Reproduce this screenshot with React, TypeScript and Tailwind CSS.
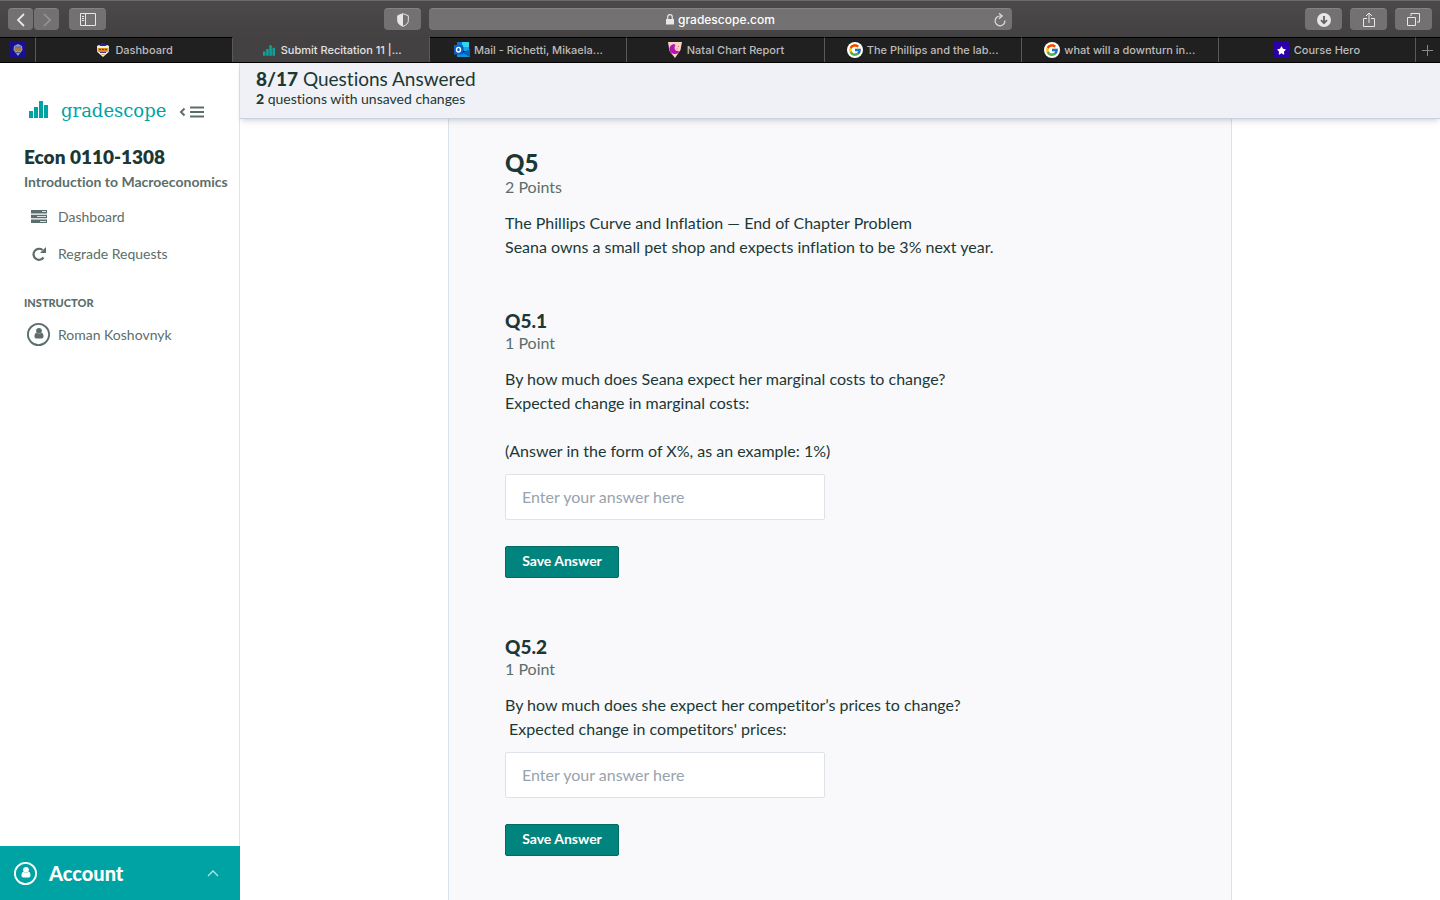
import type { ReactNode } from 'react'
import { FcGoogle } from 'react-icons/fc'
import { FaLock, FaStar } from 'react-icons/fa'

function GradescopeBars({ className }: { className: string }) {
  return (
    <svg viewBox="0 0 19 17" className={className} fill="currentColor" aria-hidden="true">
      <path d="M0 10h4v7H0zM5 6h4v11H5zM10 0h4v17h-4zM15 4h4v13h-4z" />
    </svg>
  )
}

function ShieldCrest() {
  return (
    <svg viewBox="0 0 12 14" className="h-3.5 w-3" aria-hidden="true">
      <path d="M3 1.500L6 0l3 1.500V3H3z" fill="#26209a" />
      <path d="M0 3l2-1 1.500 1h5L10 2l2 1-.3 6L6 14 .3 9z" fill="#f3efe4" />
      <path d="M1 5h10l-.4 4H1.400z" fill="#d98a16" />
      <path d="M2 6.500h2M5 6.500h2M8 6.500h2M3 9.500h6" stroke="#4a3590" fill="none" />
      <path d="M4.500 11.500h3" stroke="#d9a846" />
    </svg>
  )
}

function PinnedIcon() {
  return (
    <svg viewBox="0 0 16 16" className="size-4" aria-hidden="true">
      <path d="M0 0h16v16H0z" fill="#1c0d96" />
      <path d="M4 4l4-2 4 2 .5 4L8 14 3.500 8z" fill="#8ba0b5" />
      <path d="M4.500 6h7l-.5 3H5z" fill="#a17a42" />
      <path d="M5 5h6M6 10.500h4" stroke="#39539c" />
    </svg>
  )
}

function OutlookIcon() {
  return (
    <svg viewBox="0 0 16 16" className="size-4" aria-hidden="true">
      <path d="M3 0h12v9H3z" fill="#0a74d8" />
      <path d="M8 0h7v5H8z" fill="#35d2f8" />
      <path d="M10 5h5v4h-5z" fill="#14a4ee" />
      <path d="M3 15V9l6 2 7-4v8z" fill="#1490df" />
      <path d="M9 11l7-4v8z" fill="#0a5fb8" />
      <path d="M0 3h9v9.500H0z" fill="#0a5fc4" />
      <ellipse cx="4.500" cy="7.700" rx="2" ry="2.300" fill="none" stroke="#fff" strokeWidth="1.400" />
    </svg>
  )
}

function NatalIcon() {
  return (
    <svg viewBox="0 0 16 16" className="size-4" aria-hidden="true">
      <path d="M1 0h14l-1.500 8L8 16 2.500 9z" fill="#f6d3c4" />
      <path d="M7 2C1 3 1 11 7 12c3 .4 5-1 5.500-3C9 10 6 7 8.500 3z" fill="#b511b5" />
      <path d="M11 4h1v1h-1zM9.500 6.500h1v1h-1z" fill="#c76a50" />
    </svg>
  )
}

function GoogleIcon() {
  return (
    <span className="flex size-4 items-center justify-center rounded-full bg-white">
      <FcGoogle size={14} />
    </span>
  )
}

function CourseHeroIcon() {
  return (
    <span className="flex size-4 items-center justify-center bg-[#2b00a8] text-white">
      <FaStar size={9} />
    </span>
  )
}

type TabItem = { title: string; icon: ReactNode; active?: boolean }

const tabs: TabItem[] = [
  { title: 'Dashboard', icon: <ShieldCrest /> },
  { title: 'Submit Recitation 11 |...', icon: <GradescopeBars className="h-[11px] w-3 text-[#12a19a]" />, active: true },
  { title: 'Mail - Richetti, Mikaela...', icon: <OutlookIcon /> },
  { title: 'Natal Chart Report', icon: <NatalIcon /> },
  { title: 'The Phillips and the lab...', icon: <GoogleIcon /> },
  { title: 'what will a downturn in...', icon: <GoogleIcon /> },
  { title: 'Course Hero', icon: <CourseHeroIcon /> },
]

function ToolButton({ label, className, children }: { label: string; className: string; children: ReactNode }) {
  return (
    <button
      type="button"
      aria-label={label}
      className={`flex h-[22px] shrink-0 items-center justify-center rounded border-t border-[#848282] bg-[#737171] text-[#e8e6e6] ${className}`}
    >
      {children}
    </button>
  )
}

function Toolbar() {
  return (
    <div className="grid h-[37px] grid-cols-[376fr_628px_420fr] items-center border-t border-[#6d6c6c] bg-linear-to-b from-[#4b4949] to-[#434141] px-2">
      <div className="flex">
        <ToolButton label="Back" className="w-[25px]">
          <svg viewBox="0 0 8 14" className="h-3.5 w-2" fill="none" stroke="currentColor" strokeWidth="1.800">
            <path d="M7 1L1 7l6 6" />
          </svg>
        </ToolButton>
        <ToolButton label="Forward" className="ml-px w-[25px]">
          <svg viewBox="0 0 8 14" className="h-3.5 w-2 text-[#969494]" fill="none" stroke="currentColor" strokeWidth="1.600">
            <path d="M1 1l6 6-6 6" />
          </svg>
        </ToolButton>
        <ToolButton label="Show sidebar" className="ml-2.5 w-[37px]">
          <svg viewBox="0 0 16 13" className="h-[13px] w-4" fill="none" stroke="currentColor">
            <path d="M.5.5h15v12H.5zM5.500.5v12M2 3.500h2M2 5.500h2M2 7.500h2" />
          </svg>
        </ToolButton>
      </div>
      <div className="flex gap-2">
        <ToolButton label="Privacy report" className="w-[37px]">
          <svg viewBox="0 0 12 14" className="h-3.5 w-3">
            <path d="M6 .7l5.300 2v5c0 2.500-2 4.500-5.300 5.600C2.700 12.200.7 10.200.7 7.700v-5z" fill="none" stroke="currentColor" />
            <path d="M6 .7v12.600C2.700 12.200.7 10.200.7 7.700v-5z" fill="currentColor" />
          </svg>
        </ToolButton>
        <div className="relative flex h-[22px] flex-1 items-center justify-center gap-1 rounded border-t border-[#848282] bg-[#737171] text-white">
          <svg viewBox="0 0 8 11" className="h-[11px] w-2 text-[#e8e6e6]" aria-hidden="true">
            <path d="M0 5h8v5.500H0z" fill="currentColor" />
            <path d="M1.700 5V3a2.300 2.300 0 0 1 4.600 0v2" fill="none" stroke="currentColor" strokeWidth="1.200" />
          </svg>
          <span className="text-xs font-medium">gradescope.com</span>
          <button type="button" aria-label="Reload" className="absolute right-1.5">
            <svg viewBox="0 0 12 14" className="h-3.5 w-3 text-[#e0dede]" fill="none" stroke="currentColor" strokeWidth="1.200">
              <path d="M10.900 7.500A4.900 4.900 0 1 1 6 3h1.500" />
              <path d="M5 .3L8.200 3 5 5.700" />
            </svg>
          </button>
        </div>
      </div>
      <div className="flex justify-end gap-2">
        <ToolButton label="Downloads" className="w-[37px]">
          <svg viewBox="0 0 14 14" className="size-3.5">
            <circle cx="7" cy="7" r="7" fill="currentColor" />
            <path d="M7 3v7M4 7.200l3 3 3-3" fill="none" stroke="#646262" strokeWidth="1.800" />
          </svg>
        </ToolButton>
        <ToolButton label="Share" className="w-[37px]">
          <svg viewBox="0 0 12 16" className="h-4 w-3" fill="none" stroke="currentColor">
            <path d="M4 6.500H.5v8h11v-8H8M6 11V1M3 4l3-3 3 3" />
          </svg>
        </ToolButton>
        <ToolButton label="Show tabs" className="w-[37px]">
          <svg viewBox="0 0 13 13" className="size-[13px]" fill="none" stroke="currentColor">
            <path d="M.5 4.500h8v8h-8zM4 3V.5h8.500V9H10" />
          </svg>
        </ToolButton>
      </div>
    </div>
  )
}

function TabBar() {
  return (
    <nav aria-label="Tabs" className="flex h-[26px] border-b border-black bg-[#212020] text-[11px] text-[#bdbbbb]">
      <button type="button" aria-label="Pinned tab" className="flex w-9 shrink-0 items-center justify-center border-t border-r border-t-black border-r-[#5a5959]">
        <PinnedIcon />
      </button>
      {tabs.map((tab) => (
        <button
          key={tab.title}
          type="button"
          className={`flex min-w-0 flex-1 items-center justify-center gap-1 whitespace-nowrap border-t border-r border-r-[#5a5959] ${
            tab.active ? 'border-t-[#434141] bg-[#434141] text-[#e4e2e2]' : 'border-t-black'
          }`}
        >
          <span className="flex size-4 items-center justify-center">{tab.icon}</span>
          <span className="font-medium">{tab.title}</span>
        </button>
      ))}
      <button type="button" aria-label="New tab" className="flex w-6 shrink-0 items-center justify-center border-t border-black text-[#8a8888]">
        <svg viewBox="0 0 11 11" className="size-[11px]" stroke="currentColor">
          <path d="M5.500 0v11M0 5.500h11" />
        </svg>
      </button>
    </nav>
  )
}

function Avatar() {
  return (
    <svg viewBox="0 0 23 23" className="size-[23px] shrink-0" aria-hidden="true">
      <circle cx="11.500" cy="11.500" r="10.600" fill="none" stroke="currentColor" strokeWidth="1.800" />
      <circle cx="12" cy="7.800" r="2.900" fill="currentColor" />
      <path d="M9.300 9.800c1.600 1.500 3.800 1.500 5.400 0 1.400.5 1.800 2 1.800 3.700 0 1.300-.7 2-1.800 2H9.300c-1.100 0-1.800-.7-1.800-2 0-1.700.4-3.200 1.800-3.700z" fill="currentColor" />
    </svg>
  )
}

function Sidebar() {
  return (
    <aside className="flex w-60 shrink-0 flex-col border-r border-[#e1e4e6] text-[#5b6e6b]">
      <div className="flex-1 px-6 pt-8">
        <div className="flex h-8 items-center">
          <a href="#" className="flex items-center text-[#00a3a3]">
            <GradescopeBars className="mr-1 mb-1 ml-[5px] h-[17px] w-[19px]" />
            <span className="ml-[9px] font-['DejaVu_Serif',serif] text-[18px] leading-8">gradescope</span>
          </a>
          <button type="button" aria-label="Collapse sidebar" className="mt-0.5 ml-[13px]">
            <svg viewBox="0 0 25 12" className="h-3 w-[25px]" fill="none" stroke="currentColor" strokeWidth="2">
              <path d="M5.500 2.500L2 6l3.500 3.500M11 1.500h14M11 6h14M11 10.500h14" />
            </svg>
          </button>
        </div>
        <h1 className="mt-4 text-[19px] leading-7 font-extrabold text-[#1b3835]">Econ 0110-1308</h1>
        <p className="text-sm leading-[22px] font-bold whitespace-nowrap">Introduction to Macroeconomics</p>
        <nav className="mt-[5px] text-sm">
          <a href="#" className="flex h-[37px] items-center gap-[11px]">
            <svg viewBox="0 0 16 13" className="ml-[7px] h-[13px] w-4">
              <path d="M0 0h16v3.500H0zM0 4.800h16v3.400H0zM0 9.500h16V13H0z" fill="currentColor" />
              <path d="M11 1.500h4M6 6.500h9M9 11.500h6" stroke="#fff" strokeWidth=".8" />
            </svg>
            Dashboard
          </a>
          <a href="#" className="flex h-[37px] items-center gap-3">
            <svg viewBox="0 0 14 14" className="ml-2 size-3.5">
              <path d="M11.500 10.500A5.500 5.500 0 1 1 10.500 3" fill="none" stroke="currentColor" strokeWidth="2.200" />
              <path d="M14 0v6H8z" fill="currentColor" />
            </svg>
            Regrade Requests
          </a>
        </nav>
        <h2 className="mt-[23px] text-[11px] leading-4 font-black">INSTRUCTOR</h2>
        <div className="mt-[5px] flex h-[37px] items-center gap-2 pl-[3px] text-sm">
          <Avatar />
          Roman Koshovnyk
        </div>
      </div>
      <button type="button" className="-mr-px flex h-[54px] items-center gap-3 bg-[#00a3a3] px-3.5 text-white">
        <Avatar />
        <span className="text-[20px] font-black">Account</span>
        <svg viewBox="0 0 12 8" className="mr-[7px] ml-auto h-2 w-3 opacity-70" fill="none" stroke="currentColor" strokeWidth="1.300">
          <path d="M1 7l5-5 5 5" />
        </svg>
      </button>
    </aside>
  )
}

type QuestionProps = { id: string; lines: string[] }

function Question({ id, lines }: QuestionProps) {
  return (
    <section>
      <h3 className="text-[19px] leading-5 font-black">{id}</h3>
      <p className="text-[#5b6e6b]">1 Point</p>
      <label htmlFor={id} className="mt-3 block">
        {lines.map((line, i) => (
          <span key={i} className="block min-h-6 whitespace-pre">{line}</span>
        ))}
      </label>
      <input
        id={id}
        type="text"
        placeholder="Enter your answer here"
        className="mt-[11px] block h-[46px] w-80 rounded-xs border border-[#dde3e8] bg-white px-4 pb-0.5 placeholder:text-[#98a3ad]"
      />
      <button type="button" className="mt-[26px] block h-8 w-[114px] rounded-xs border border-[#026b64] bg-[#01847d] pb-0.5 text-sm font-bold text-white">
        Save Answer
      </button>
    </section>
  )
}

export default function App() {
  return (
    <div className="flex h-screen flex-col overflow-hidden bg-white font-['Lato',sans-serif] text-[#1b3835] [font-variant-ligatures:none]">
      <header className="shrink-0 font-['Inter',sans-serif]">
        <Toolbar />
        <TabBar />
      </header>
      <div className="flex min-h-0 flex-1">
        <Sidebar />
        <div className="flex min-w-0 flex-1 flex-col">
          <div className="z-10 h-14 shrink-0 border-b border-[#c8d2e0] bg-[#f0f1f6] px-4 pt-[5px] shadow-md">
            <p className="text-[19px] leading-[22px]"><b className="font-black">8/17</b> Questions Answered</p>
            <p className="text-sm leading-[18px]"><b className="font-black">2</b> questions with unsaved changes</p>
          </div>
          <main className="min-h-0 flex-1 overflow-hidden">
            <div className="mx-auto min-h-full max-w-[784px] border-x border-[#dbe1ea] bg-[#f9f9fc] px-14 pt-8 pb-11 text-base leading-6">
              <h2 className="text-[24px] leading-6 font-black">Q5</h2>
              <p className="text-[#5b6e6b]">2 Points</p>
              <p className="mt-3">The Phillips Curve and Inflation — End of Chapter Problem</p>
              <p>Seana owns a small pet shop and expects inflation to be 3% next year.</p>
              <div className="mt-[52px] flex flex-col gap-[59px]">
                <Question
                  id="Q5.1"
                  lines={[
                    'By how much does Seana expect her marginal costs to change?',
                    'Expected change in marginal costs:',
                    '',
                    '(Answer in the form of X%, as an example: 1%)',
                  ]}
                />
                <Question
                  id="Q5.2"
                  lines={[
                    'By how much does she expect her competitor’s prices to change?',
                    " Expected change in competitors' prices:",
                  ]}
                />
              </div>
            </div>
          </main>
        </div>
      </div>
    </div>
  )
}
